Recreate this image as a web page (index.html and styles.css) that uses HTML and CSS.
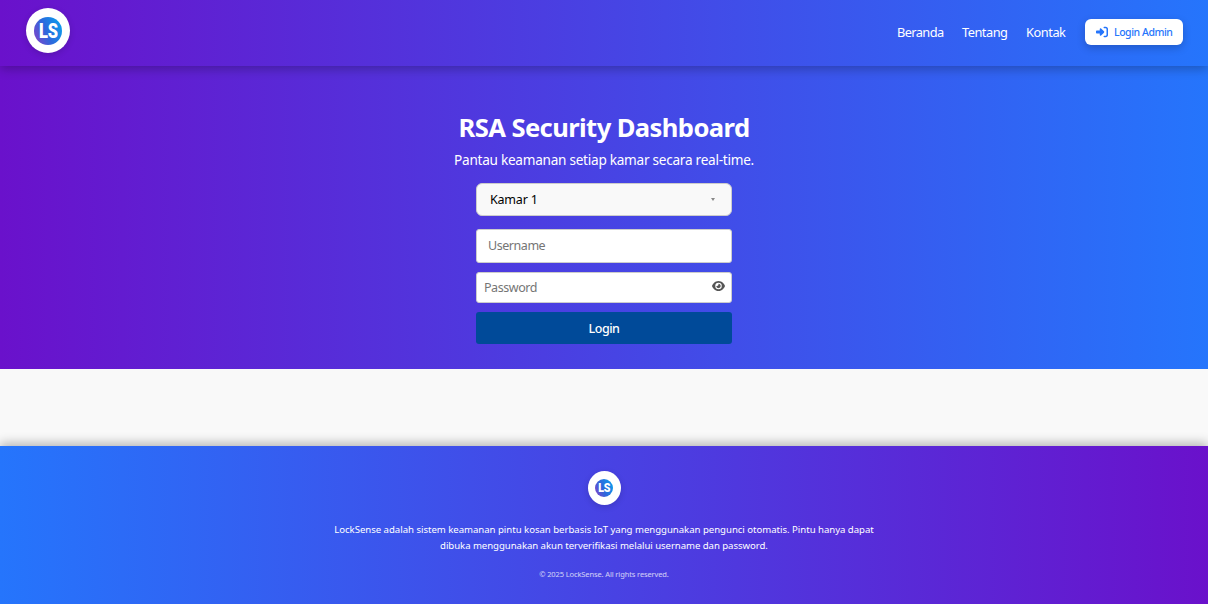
FILE: index.html
```html
<!DOCTYPE html>
<html lang="id">
<head>
<meta charset="utf-8">
<title>LockSense</title>
<link rel="stylesheet" href="styles.css">
</head>
<body>
<header class="navbar">
  <div class="logo"><span class="logo-mark"><b class="logo-text">LS</b></span></div>
  <nav class="menu">
    <a class="link beranda">Beranda</a>
    <a class="link tentang">Tentang</a>
    <a class="link kontak">Kontak</a>
    <a class="admin">
      <svg class="admin-icon" viewBox="0 0 512 512"><path d="M217.900 105.900L340.700 228.700c7.200 7.200 11.300 17.100 11.300 27.300s-4.100 20.100-11.300 27.300L217.900 406.100c-6.400 6.400-15 9.900-24 9.900c-18.700 0-33.900-15.200-33.900-33.900l0-62.100L32 320c-17.700 0-32-14.300-32-32l0-64c0-17.700 14.300-32 32-32l128 0 0-62.100c0-18.700 15.200-33.900 33.900-33.900c9 0 17.600 3.600 24 9.900zM352 416l64 0c17.700 0 32-14.300 32-32l0-256c0-17.700-14.300-32-32-32l-64 0c-17.700 0-32-14.300-32-32s14.300-32 32-32l64 0c53 0 96 43 96 96l0 256c0 53-43 96-96 96l-64 0c-17.700 0-32-14.300-32-32s14.300-32 32-32z"/></svg>
      <span class="admin-label">Login Admin</span>
    </a>
  </nav>
</header>
<main class="hero">
  <h1 class="title">RSA Security Dashboard</h1>
  <p class="subtitle">Pantau keamanan setiap kamar secara real-time.</p>
  <form class="form">
    <div class="field select"><span>Kamar 1</span><i class="arrow"></i></div>
    <div class="field username">Username</div>
    <div class="field password"><span>Password</span>
      <svg class="eye" viewBox="0 0 576 512"><path d="M288 32c-80.800 0-145.500 36.800-192.600 80.600C48.600 156 17.300 208 2.500 243.700c-3.300 7.900-3.300 16.700 0 24.600C17.300 304 48.600 356 95.400 399.400C142.500 443.200 207.200 480 288 480s145.500-36.800 192.600-80.600c46.800-43.500 78.100-95.400 93-131.100c3.300-7.900 3.300-16.700 0-24.600c-14.900-35.700-46.200-87.700-93-131.100C433.500 68.800 368.800 32 288 32zM144 256a144 144 0 1 1 288 0 144 144 0 1 1 -288 0zm144-64c0 35.300-28.700 64-64 64c-7.100 0-13.900-1.200-20.300-3.300c-5.500-1.800-11.900 1.600-11.700 7.400c.3 6.900 1.300 13.800 3.200 20.700c13.700 51.200 66.400 81.600 117.600 67.900s81.600-66.400 67.900-117.600c-11.100-41.500-47.800-69.400-88.600-71.100c-5.800-.2-9.200 6.100-7.400 11.700c2.100 6.400 3.300 13.200 3.300 20.300z"/></svg>
    </div>
    <div class="submit">Login</div>
  </form>
</main>
<footer class="footer">
  <div class="logo logo-small"><span class="logo-mark"><b class="logo-text">LS</b></span></div>
  <p class="about"><span class="line-a">LockSense adalah sistem keamanan pintu kosan berbasis IoT yang menggunakan pengunci otomatis. Pintu hanya dapat</span><br><span class="line-b">dibuka menggunakan akun terverifikasi melalui username dan password.</span></p>
  <p class="copy">© 2025 LockSense. All rights reserved.</p>
</footer>
</body>
</html>
```
FILE: styles.css
```css
* { box-sizing: border-box; }
body {
  margin: 0;
  height: 604px;
  display: flex;
  flex-direction: column;
  background: #f9f9f9;
  font-family: "Noto Sans", "Open Sans", sans-serif;
  overflow: hidden;
}
p, h1 { margin: 0; white-space: nowrap; }
.navbar {
  position: relative;
  height: 66px;
  flex: none;
  display: flex;
  justify-content: space-between;
  padding: 8px 25px 0 26px;
  background: linear-gradient(90deg, #6a11cb, #2575fc);
  box-shadow: 0 3px 10px rgba(0, 0, 0, 0.26);
}
.logo {
  width: 44px;
  height: 45px;
  border-radius: 50%;
  background: #fff;
  display: flex;
  align-items: center;
  justify-content: center;
  box-shadow: 0 2px 6px rgba(0, 0, 0, 0.15);
}
.logo-mark {
  width: 28px;
  height: 28px;
  border-radius: 50%;
  background: linear-gradient(65deg, #8a3fc8, #2d68dc 45%, #05a5f0);
  color: #fff;
  font: bold 20px/28px Roboto, sans-serif;
  display: flex;
  justify-content: center;
}
.logo-text { transform: scaleX(0.82); letter-spacing: -0.3px; }
.menu {
  display: flex;
  align-items: center;
  height: 48px;
  color: #fff;
  font-size: 12.800px;
}
.link { margin-right: 19px; white-space: nowrap; }
.beranda { width: 46px; letter-spacing: -0.6px; }
.tentang { width: 45px; letter-spacing: -0.5px; }
.kontak { width: 40px; letter-spacing: -0.45px; }
.admin {
  width: 98px;
  height: 26px;
  display: flex;
  align-items: center;
  gap: 6px;
  padding-left: 11px;
  border-radius: 6px;
  background: #fff;
  color: #2575fc;
  font-size: 10.500px;
  font-weight: 500;
  letter-spacing: -0.45px;
  white-space: nowrap;
  box-shadow: 0 3px 8px rgba(0, 0, 0, 0.2);
}
.admin-label { margin-top: -1px; }
.admin-icon { width: 12px; height: 12px; margin-top: -1px; flex: none; fill: currentColor; }
.hero {
  height: 303px;
  flex: none;
  display: flex;
  flex-direction: column;
  align-items: center;
  padding-top: 44px;
  background: linear-gradient(90deg, #6a11cb, #2575fc);
  color: #fff;
}
.title { font-size: 25.600px; line-height: 36px; letter-spacing: -0.6px; }
.subtitle { margin-top: 4px; font-size: 13.600px; line-height: 20px; letter-spacing: -0.26px; }
.form { width: 256px; margin-top: 13px; }
.field {
  display: flex;
  align-items: center;
  justify-content: space-between;
  border: 1px solid #ccc;
  border-radius: 3px;
  background: #fff;
  color: #757575;
  font-size: 12.500px;
  letter-spacing: -0.45px;
}
.select {
  height: 33px;
  padding: 0 16px 0 13px;
  border-radius: 6px;
  background: #f9f9f9;
  color: #000;
  letter-spacing: -0.2px;
}
.arrow {
  border: 2.500px solid transparent;
  border-top: 3px solid #888;
  border-bottom: 0;
}
.username { height: 34px; margin-top: 13px; padding: 0 11px 2px; }
.password { height: 31px; margin-top: 9px; padding: 0 6px 0 7px; }
.eye { width: 13px; height: 12px; margin-top: -3px; fill: #555; }
.submit {
  height: 32px;
  margin-top: 9px;
  border-radius: 3px;
  background: #004a99;
  font-size: 12.500px;
  font-weight: 500;
  line-height: 33px;
  letter-spacing: -0.5px;
  text-align: center;
}
.footer {
  height: 158px;
  flex: none;
  margin-top: 77px;
  padding-top: 25px;
  display: flex;
  flex-direction: column;
  align-items: center;
  background: linear-gradient(90deg, #2575fc, #6a11cb);
  box-shadow: 0 -3px 10px rgba(0, 0, 0, 0.28);
  color: #fff;
  text-align: center;
}
.logo-small { width: 33px; height: 34px; }
.logo-small .logo-mark { width: 18px; height: 18px; font-size: 13px; line-height: 18px; }
.about { margin-top: 17px; font-size: 9.600px; line-height: 16px; }
.line-a { letter-spacing: -0.025px; }
.line-b { letter-spacing: -0.05px; }
.copy { margin-top: 14px; font-size: 7.500px; line-height: 12px; letter-spacing: -0.12px; opacity: 0.75; }
```
